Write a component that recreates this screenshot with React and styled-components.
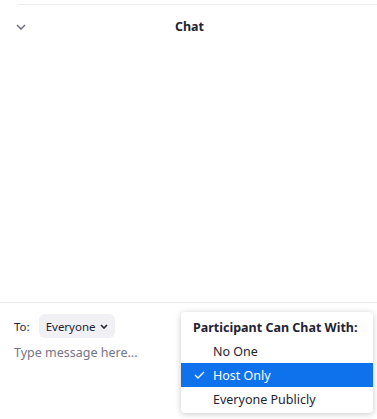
import React from "react";
import styled, { createGlobalStyle } from "styled-components";

const Global = createGlobalStyle`
  body {
    margin: 0;
    font-family: "Noto Sans", "Open Sans", sans-serif;
    color: #232333;
    background: #fff;
  }
`;

const Panel = styled.div`
  position: relative;
  width: 377px;
  height: 419px;
  display: flex;
  flex-direction: column;
  background: #fff;
  overflow: hidden;
`;

const TopRule = styled.div`
  margin: 4px 0 0 18px;
  height: 1px;
  background: #ececf0;
`;

const Header = styled.div`
  position: relative;
  height: 42px;
  display: flex;
  align-items: center;
  justify-content: center;
`;

const Collapse = styled.svg`
  position: absolute;
  left: 16px;
  top: 19px;
`;

const Title = styled.div`
  font-size: 12.5px;
  font-weight: 700;
  color: #232333;
  margin-left: 2px;
`;

const Messages = styled.div`
  flex: 1;
`;

const Composer = styled.div`
  border-top: 1px solid #ececf0;
  height: 117px;
  display: flex;
  flex-direction: column;
  padding: 11px 14px 0;
  box-sizing: border-box;
`;

const ToRow = styled.div`
  display: flex;
  align-items: center;
  gap: 9px;
  font-size: 11.5px;
`;

const Recipient = styled.div`
  display: flex;
  align-items: center;
  gap: 4px;
  height: 24px;
  padding: 0 7px;
  border-radius: 6px;
  background: #f1f1f5;
  font-size: 11.5px;
`;

const Placeholder = styled.div`
  margin-top: 6px;
  font-size: 12.5px;
  color: #747487;
`;

const Menu = styled.div`
  position: absolute;
  left: 181px;
  top: 312px;
  width: 192px;
  padding: 3px 0 2px;
  background: #fff;
  border-radius: 4px;
  box-shadow: 0 1px 6px rgba(0, 0, 0, 0.22);
`;

const MenuTitle = styled.div`
  padding: 0 12px;
  height: 24px;
  display: flex;
  align-items: center;
  white-space: nowrap;
  font-size: 12.5px;
  font-weight: 700;
  color: #232333;
`;

const Item = styled.div`
  position: relative;
  height: 24px;
  display: flex;
  align-items: center;
  padding-left: 32px;
  font-size: 12.5px;
  color: ${(p) => (p.$active ? "#fff" : "#232333")};
  background: ${(p) => (p.$active ? "#0e72ed" : "transparent")};
`;

const Check = styled.svg`
  position: absolute;
  left: 13px;
  top: 8px;
`;

export default function App() {
  return (
    <Panel>
      <Global />
      <TopRule />
      <Header>
        <Collapse width="10" height="6" viewBox="0 0 10 6">
          <path d="M1 1l4 4 4-4" fill="none" stroke="#6e6e85" strokeWidth="1.5" />
        </Collapse>
        <Title>Chat</Title>
      </Header>
      <Messages />
      <Composer>
        <ToRow>
          <span>To:</span>
          <Recipient>
            Everyone
            <svg width="8" height="5" viewBox="0 0 8 5">
              <path d="M1 1l3 3 3-3" fill="none" stroke="#232333" strokeWidth="1.6" />
            </svg>
          </Recipient>
        </ToRow>
        <Placeholder>Type message here...</Placeholder>
      </Composer>
      <Menu>
        <MenuTitle>Participant Can Chat With:</MenuTitle>
        <Item>No One</Item>
        <Item $active>
          <Check width="11" height="8" viewBox="0 0 11 8">
            <path d="M1 4l3 3 6-6" fill="none" stroke="#fff" strokeWidth="1.3" />
          </Check>
          Host Only
        </Item>
        <Item>Everyone Publicly</Item>
      </Menu>
    </Panel>
  );
}
